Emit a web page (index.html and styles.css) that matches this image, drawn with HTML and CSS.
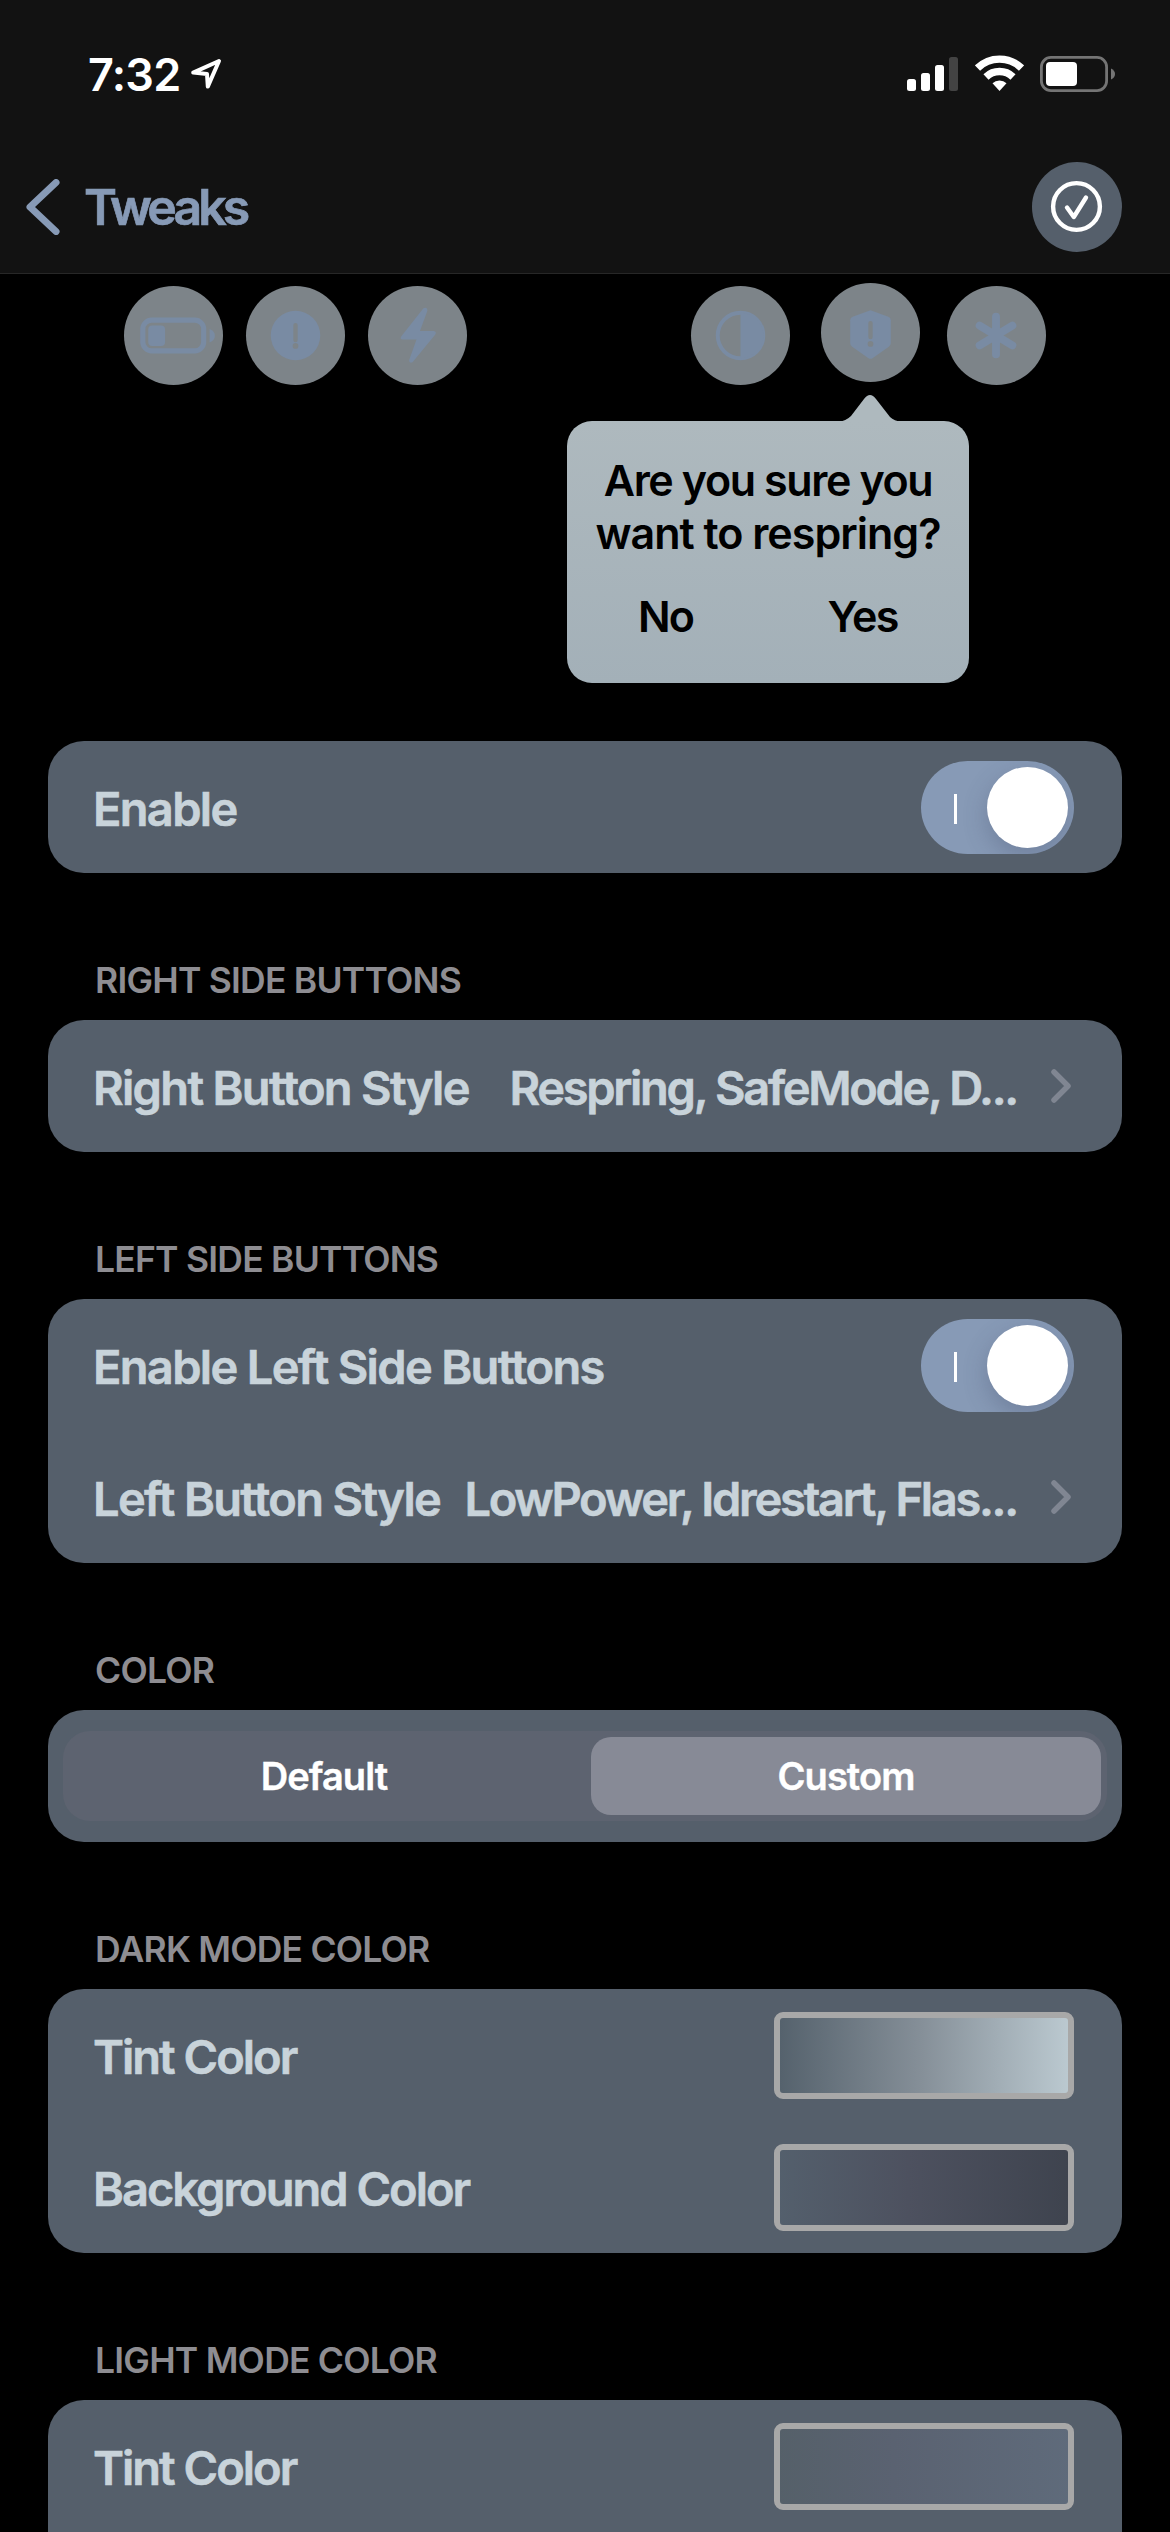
FILE: index.html
```html
<!DOCTYPE html>
<html lang="en">
<head>
<meta charset="utf-8">
<title>Tweaks</title>
<link rel="stylesheet" href="styles.css">
</head>
<body>
<header class="top">
  <div class="status">
    <div class="clock">
      <span class="time">7:32</span>
      <svg class="location" viewBox="0 0 32 32"><path d="M29 3 3.2 14.6 17 16l.8 12.600z" /></svg>
    </div>
    <div class="signals">
      <svg class="cell" viewBox="0 0 51 34"><g fill="#fff"><rect y="22" width="9" height="12" rx="2.500"/><rect x="14" y="16" width="9" height="18" rx="2.500"/><rect x="28" y="8" width="9" height="26" rx="2.500"/></g><rect x="42" width="9" height="34" rx="2.500" fill="#434343"/></svg>
      <svg class="wifi" viewBox="0 0 49 36"><g fill="none" stroke="#fff" stroke-width="7.400"><path d="M2.500 13.100a31.500 31.500 0 0 1 44 0"/><path d="M11 22a19.500 19.500 0 0 1 27 0"/></g><path d="M24.500 36l7-7.700a10 10 0 0 0-14 0z" fill="#fff"/></svg>
      <svg class="battery" viewBox="0 0 76 36"><rect x="1.400" y="1.400" width="65.200" height="33.200" rx="9.500" fill="none" stroke="#747474" stroke-width="2.800"/><rect x="6" y="6" width="31" height="24" rx="4" fill="#fff"/><path d="M71 12.500q4 2 4 5.500t-4 5.500z" fill="#747474"/></svg>
    </div>
  </div>
  <nav class="nav">
    <a class="back">
      <svg class="back-icon" viewBox="0 0 34 56"><path d="M30 3.500 4 28l26 24.500"/></svg>
      <span class="back-label">Tweaks</span>
    </a>
    <button class="apply" aria-label="Apply">
      <svg viewBox="0 0 90 90"><circle cx="44.500" cy="44.500" r="23.400"/><path d="M35 45.500 41.800 55 54 35.500"/></svg>
    </button>
  </nav>
</header>

<section class="preview">
  <div class="dots left">
    <span class="dot"><svg viewBox="0 0 100 100"><rect x="19" y="34.500" width="61.500" height="31" rx="9" class="line"/><rect x="24.500" y="40" width="17" height="20.500" rx="4"/><path d="M86.500 43.500q5.300 2 5.300 6.800t-5.300 6.800z"/></svg></span>
    <span class="dot"><svg viewBox="0 0 100 100"><circle cx="50" cy="50" r="25"/><path class="cut" d="M50 39.500v15"/><circle class="hole" cx="50" cy="60.500" r="2.900"/></svg></span>
    <span class="dot"><svg viewBox="0 0 100 100"><path d="M56 22.500 33.500 51q-1.500 3 1.500 3h14l-7.500 21q0 3.500 3.500 2L68 49q1.500-3-1.500-3.500H52.500L60 25q0-4.500-4-2.500z"/></svg></span>
  </div>
  <div class="dots right">
    <span class="dot"><svg viewBox="0 0 100 100"><circle class="ring" cx="50" cy="50" r="23"/><path d="M50 27a23 23 0 0 1 0 46z"/></svg></span>
    <span class="dot raised"><svg viewBox="0 0 100 100"><path d="M50 27.500 68 34q2.500 1 2.500 3.500v23q0 2.500-2 4L52 76q-2 1.200-4 0L31.500 64.500q-2-1.500-2-4v-23q0-2.500 2.500-3.500z"/><path class="cut" d="M50 40.500v14"/><circle class="hole" cx="50" cy="61.500" r="2.900"/></svg></span>
    <span class="dot"><svg viewBox="0 0 100 100"><path class="star" d="M49.500 31v38M33 40l33 20M66 40 33 60"/></svg></span>
  </div>
  <div class="popover">
    <svg class="popover-arrow" viewBox="0 0 64 28"><path d="M0 28q8-1 13-6L26 5q6-8 12 0l14 18q4 4 12 5z"/></svg>
    <p class="question"><span class="tight">Are you sure you</span><br><span>want to respring?</span></p>
    <div class="answers"><span>No</span><span>Yes</span></div>
  </div>
</section>

<main class="settings">
  <section class="group">
    <div class="card">
      <div class="row"><span class="label">Enable</span><span class="toggle"></span></div>
    </div>
  </section>
  <section class="group">
    <h2>RIGHT SIDE BUTTONS</h2>
    <div class="card">
      <div class="row"><span class="label">Right Button Style</span><span class="value">Respring, SafeMode, D...</span><svg class="chevron" viewBox="0 0 20 34"><path d="M3 3l14 14L3 31"/></svg></div>
    </div>
  </section>
  <section class="group">
    <h2>LEFT SIDE BUTTONS</h2>
    <div class="card">
      <div class="row"><span class="label">Enable Left Side Buttons</span><span class="toggle"></span></div>
      <div class="row"><span class="label">Left Button Style</span><span class="value">LowPower, Idrestart, Flas...</span><svg class="chevron" viewBox="0 0 20 34"><path d="M3 3l14 14L3 31"/></svg></div>
    </div>
  </section>
  <section class="group">
    <h2>COLOR</h2>
    <div class="card segment-card">
      <div class="segments"><span class="segment">Default</span><span class="segment selected">Custom</span></div>
    </div>
  </section>
  <section class="group">
    <h2>DARK MODE COLOR</h2>
    <div class="card">
      <div class="row color-row"><span class="label">Tint Color</span><span class="swatch dark-tint"></span></div>
      <div class="row color-row"><span class="label">Background Color</span><span class="swatch dark-background"></span></div>
    </div>
  </section>
  <section class="group">
    <h2>LIGHT MODE COLOR</h2>
    <div class="card open-ended">
      <div class="row color-row"><span class="label">Tint Color</span><span class="swatch light-tint"></span></div>
    </div>
  </section>
</main>
</body>
</html>
```
FILE: styles.css
```css
* { box-sizing: border-box; }

body {
  margin: 0;
  width: 1170px;
  height: 2532px;
  overflow: hidden;
  background: #000;
  color: #fff;
  font-family: Inter, "Liberation Sans", sans-serif;
  font-weight: 600;
}

svg { display: block; }

/* Status bar and navigation */
.top {
  height: 274px;
  background: #121212;
  border-bottom: 1px solid #272727;
}
.status {
  height: 162px;
  display: flex;
  justify-content: space-between;
  padding: 0 54px 0 88px;
}
.clock { display: flex; }
.time {
  margin-top: 47px;
  width: 102px;
  font-size: 45px;
  line-height: 56px;
  letter-spacing: -0.700px;
}
.location { width: 32px; height: 32px; margin-top: 58px; }
.location path { fill: none; stroke: #fff; stroke-width: 4; stroke-linejoin: round; }
.signals { display: flex; }
.cell { width: 51px; height: 34px; margin: 57px 17px 0 0; }
.wifi { width: 49px; height: 36px; margin: 55px 16px 0 0; }
.battery { width: 76px; height: 36px; margin-top: 56px; }

.nav {
  height: 90px;
  display: flex;
  align-items: center;
  justify-content: space-between;
  padding: 0 48px 0 26px;
}
.back { display: flex; align-items: center; color: #879ab6; }
.back-icon { width: 34px; height: 56px; margin-right: 24px; }
.back-icon path { fill: none; stroke: currentColor; stroke-width: 7; stroke-linecap: round; stroke-linejoin: round; }
.back-label { font-size: 50px; line-height: 60px; letter-spacing: -3.900px; -webkit-text-stroke: 0.700px currentColor; }
.apply {
  width: 90px;
  height: 90px;
  padding: 0;
  border: 0;
  border-radius: 50%;
  background: #555f6b;
}
.apply circle, .apply path { fill: none; stroke: #fff; stroke-width: 4.400; stroke-linecap: round; stroke-linejoin: round; }

/* Button preview with confirmation */
.preview {
  position: relative;
  height: 467px;
  padding: 12px 124px 0;
  display: flex;
  justify-content: space-between;
}
.dots { display: flex; gap: 23px; }
.dots.right { gap: 29px; }
.dot { width: 99px; height: 99px; border-radius: 50%; background: #7d8489; fill: #798ba3; }
.dot.raised { margin: -3px -2px 0 2px; }
.dot .line, .dot .ring, .dot .star { fill: none; stroke: #798ba3; stroke-width: 5.200; }
.dot .ring { stroke-width: 4; }
.dot .star { stroke-width: 8; stroke-linecap: round; }
.dot .cut { fill: none; stroke: #7d8489; stroke-width: 4.400; stroke-linecap: round; }
.dot .hole { fill: #7d8489; }

.popover {
  position: absolute;
  left: 567px;
  top: 147px;
  width: 402px;
  height: 262px;
  padding-top: 33px;
  border-radius: 25px;
  background: linear-gradient(#aeb9be, #a3b0b8);
  color: #000;
  font-size: 43px;
  text-align: center;
}
.popover-arrow { position: absolute; left: 271px; top: -27px; width: 64px; height: 28px; fill: #aeb9be; }
.question { margin: 0; line-height: 52.500px; letter-spacing: -1px; white-space: nowrap; }
.question .tight { letter-spacing: -1.400px; }
.answers { display: grid; grid-template-columns: 1fr 1fr; margin-top: 31px; padding-right: 8px; line-height: 52px; letter-spacing: -1.800px; }

/* Settings list */
.settings { padding: 0 48px; }
.group + .group { margin-top: 86px; }
h2 {
  margin: 0;
  height: 61px;
  padding-left: 47px;
  font-size: 35.500px;
  line-height: 43px;
  font-weight: 600;
  letter-spacing: -0.780px;
  color: #8e8d92;
}
.card { border-radius: 36px; background: #555f6b; overflow: hidden; }
.card.open-ended { border-radius: 36px 36px 0 0; }
.row {
  height: 132px;
  display: flex;
  align-items: center;
  padding: 0 48px 0 45px;
  font-size: 47px;
  letter-spacing: -1.670px;
  -webkit-text-stroke: 0.600px currentColor;
  line-height: 60px;
  color: #c8d3da;
  white-space: nowrap;
}
.color-row { letter-spacing: -2px; }
.label { margin-top: 4px; }
.value { margin: 4px 34px 0 auto; letter-spacing: -2.300px; }
.chevron { width: 20px; height: 34px; margin-right: 3px; flex: none; }
.chevron path { fill: none; stroke: #808692; stroke-width: 5.500; stroke-linecap: round; stroke-linejoin: round; }

.toggle {
  width: 153px;
  height: 93px;
  margin: 1px 0 0 auto;
  padding: 6px;
  display: flex;
  align-items: center;
  overflow: hidden;
  border-radius: 47px;
  background: #879ab6;
}
.toggle::before { content: ""; width: 3px; height: 30px; margin: 3px 30px 0 27px; background: #fff; }
.toggle::after { content: ""; width: 81px; height: 81px; border-radius: 50%; background: #fff; box-shadow: 0 9px 24px rgba(60, 70, 100, 0.300); }

.segment-card { height: 132px; padding: 21px 15px; }
.segments {
  height: 90px;
  padding: 6px;
  display: grid;
  grid-template-columns: 510px 510px;
  justify-content: space-between;
  border-radius: 27px;
  background: #5d6370;
  font-size: 38px;
  letter-spacing: -0.900px;
  -webkit-text-stroke: 0.400px currentColor;
}
.segment { line-height: 78px; text-align: center; border-radius: 20px; }
.segment.selected { background: #878a96; }

.swatch { width: 300px; height: 87px; margin: 1px 0 0 auto; border: 6px solid #a8a8a8; border-radius: 9px; background-origin: border-box; }
.dark-tint { background-image: linear-gradient(90deg, #53606b, #848e97 48%, #bdcbd2); }
.dark-background { background-image: linear-gradient(90deg, #54606d, #4d515f 45%, #3e434e); }
.light-tint { background-image: linear-gradient(90deg, #556069, #5a6271 40%, #5f6b7b); }
```
